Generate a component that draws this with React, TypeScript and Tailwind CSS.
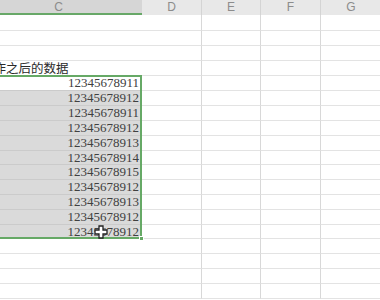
import React from "react";

const values = [
  "12345678911",
  "12345678912",
  "12345678911",
  "12345678912",
  "12345678913",
  "12345678914",
  "12345678915",
  "12345678912",
  "12345678913",
  "12345678912",
  "12345678912",
];

// row heights (px) including the 1px bottom grid line
const heights = [16, 15, 15, 15, 15, 15, 15, 15, 15, 14, 15, 15, 15, 15, 14, 15, 15, 15, 15];

const FIRST_DATA = 4;

function CrossCursor() {
  return (
    <svg width="14" height="14" viewBox="0 0 14 14" className="block">
      <path
        d="M5 1h4v4h4v4H9v4H5V9H1V5h4z"
        fill="#ffffff"
        stroke="#222222"
        strokeWidth="1.3"
        strokeLinejoin="miter"
      />
    </svg>
  );
}

export default function App() {
  const dataTop = 15 + heights.slice(0, FIRST_DATA).reduce((a, b) => a + b, 0) - 1;
  const dataHeight = heights.slice(FIRST_DATA, FIRST_DATA + values.length).reduce((a, b) => a + b, 0) + 1;

  return (
    <div
      className="relative w-[380px] h-[300px] overflow-hidden bg-white"
      style={{ fontFamily: '"Liberation Sans", "Noto Sans CJK SC", sans-serif' }}
    >
      <div className="relative ml-[-25px] w-[420px]">
        {/* column headers */}
        <div className="flex h-[15px] text-[12px] leading-[15px] text-[#8c8c8c]">
          <div className="w-[167px] shrink-0 bg-[#d6d6d6] border-b-2 border-[#68a868] text-center">C</div>
          <div className="w-[60px] shrink-0 bg-[#e8e8e8] border-r border-[#d4d4d4] text-center">D</div>
          <div className="w-[59px] shrink-0 bg-[#e8e8e8] border-r border-[#d4d4d4] text-center">E</div>
          <div className="w-[60px] shrink-0 bg-[#e8e8e8] border-r border-[#d4d4d4] text-center">F</div>
          <div className="w-[74px] shrink-0 bg-[#e8e8e8] pr-[14px] text-center">G</div>
        </div>

        {/* sheet rows */}
        {heights.map((h, i) => {
          const di = i - FIRST_DATA;
          const isData = di >= 0 && di < values.length;
          const cellBg = isData && di > 0 ? "bg-[#dadada]" : "bg-white";
          const lineC = isData ? "border-[#cbcbcb]" : "border-[#e3e3e3]";
          return (
            <div key={i} className="flex" style={{ height: h }}>
              <div
                className={`relative w-[167px] shrink-0 border-b ${lineC} ${cellBg} flex items-center justify-end pr-[3px] overflow-visible`}
              >
                {i === FIRST_DATA - 1 && (
                  <span
                    className="absolute left-[6px] bottom-[0px] whitespace-nowrap text-[12.5px] leading-[14px] text-[#2a2a2a]"
                    style={{ fontFamily: '"Noto Sans CJK SC", sans-serif' }}
                  >
                    操作之后的数据
                  </span>
                )}
                {isData && (
                  <span
                    className="text-[13px] leading-[14px] text-[#404040]"
                    style={{ fontFamily: '"Liberation Serif", serif' }}
                  >
                    {values[di]}
                  </span>
                )}
              </div>
              <div className="w-[60px] shrink-0 border-b border-r border-[#e3e3e3] border-r-[#d8d8d8]" />
              <div className="w-[59px] shrink-0 border-b border-r border-[#e3e3e3] border-r-[#d8d8d8]" />
              <div className="w-[60px] shrink-0 border-b border-r border-[#e3e3e3] border-r-[#d8d8d8]" />
              <div className="w-[74px] shrink-0 border-b border-[#e3e3e3]" />
            </div>
          );
        })}

        {/* selection frame */}
        <div
          className="absolute left-[-4px] w-[171px] border-2 border-[#66a966] pointer-events-none"
          style={{ top: dataTop, height: dataHeight }}
        >
          <div className="absolute right-[-4px] bottom-[-4px] w-[5px] h-[5px] bg-[#66a966] border border-white" />
        </div>

        {/* mouse pointer */}
        <div className="absolute left-[119px] top-[225px]">
          <CrossCursor />
        </div>
      </div>
    </div>
  );
}
